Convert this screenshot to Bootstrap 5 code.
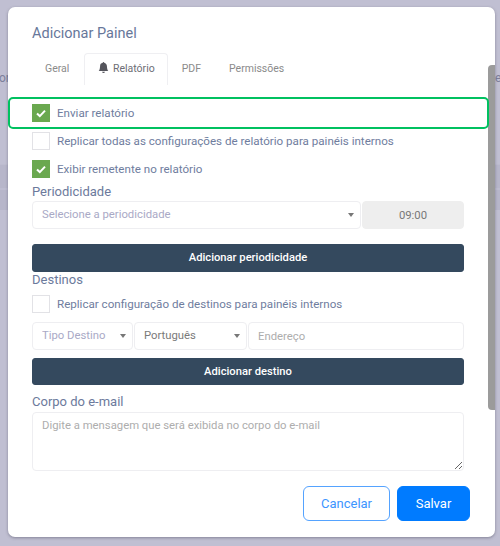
<!DOCTYPE html>
<html lang="pt-BR">
<head>
    <meta charset="UTF-8">
    <meta name="viewport" content="width=device-width, initial-scale=1.0">
    <title>Adicionar Painel</title>
    <link href="https://cdn.jsdelivr.net/npm/bootstrap@5.3.0/dist/css/bootstrap.min.css" rel="stylesheet">
    <style>
        html, body { height: 100%; overflow: hidden; }
        body {
            background: #c0bfd2;
            font-family: Roboto, "Liberation Sans", sans-serif;
            color: #6c7a9c;
            font-size: 12px;
        }
        /* what shows behind the modal */
        .backdrop-layer { position: absolute; inset: 0; }
        .backdrop-band { position: absolute; left: 0; right: 0; top: 164px; height: 46px; background: #b7b6ca; border-top: 1px solid #bdbccf; }
        .backdrop-line { position: absolute; left: 0; right: 0; top: 188px; height: 2px; background: #bdbcd0; }
        .backdrop-txt { position: absolute; top: 69px; font-size: 12px; color: #7d7f9b; }
        .txt-left { left: -1px; }
        .txt-right { left: 495px; }

        .painel {
            position: absolute;
            left: 8px; top: 7px;
            width: 487px; height: 530px;
            background: #fff;
            border-radius: 7px;
            box-shadow: 0 1px 3px rgba(60, 60, 80, .45);
            padding: 18px 31px 0 24px;
        }
        .painel-title { font-size: 14.5px; font-weight: 400; line-height: 17px; margin: 0 0 11px; color: #67779a; }

        .painel .nav-tabs { border: 0; height: 32px; margin: 0 0 19px; }
        .painel .nav-link {
            font-size: 10.5px; line-height: 13px;
            color: #8b8b8b;
            padding: 8px 13px;
            height: 32px;
            border: 1px solid transparent;
            border-bottom: 0;
            border-radius: 4px 4px 0 0;
        }
        .painel .nav-link.tab-geral { padding-left: 12px; padding-right: 14px; }
        .painel .nav-link.active { color: #6d6d75; border-color: #efeff2; background: #fff; padding-right: 12px; }
        .bell-ico { width: 11px; height: 11px; fill: #55555c; vertical-align: -1px; margin-right: 1px; }

        .check-row { display: flex; align-items: center; height: 18px; margin-bottom: 10px; }
        .check-row input {
            appearance: none;
            width: 18px; height: 18px;
            margin: 0 7px 0 0;
            flex: none;
            border: 1px solid #e2e2e6;
            background: #fff;
        }
        .check-row input:checked {
            border-color: #6aa84f;
            background: #6aa84f url("data:image/svg+xml,%3Csvg xmlns='http://www.w3.org/2000/svg' viewBox='0 0 18 18'%3E%3Cpath d='M5 9.5l2.8 2.6L13 6.6' fill='none' stroke='%23fff' stroke-width='2'/%3E%3C/svg%3E") center / 18px no-repeat;
        }
        .check-row label { font-size: 11.6px; line-height: 18px; color: #6f7d9e; }
        .check-row.last-check { margin-bottom: 6px; }
        .check-row.dest-check { margin: 8px 0 9px; }

        .sec-label { display: block; font-size: 13px; line-height: 16px; margin: 0; color: #6c7a9c; }
        .label-dest { line-height: 14px; margin-top: 1px; }
        .label-corpo { margin-top: 9px; }

        .periodo-row { margin-top: 1px; }
        .destino-row { gap: 1px; }
        .tipo-sel { width: 101px; flex: none; }
        .idioma-sel { width: 113px; flex: none; }
        .painel .time-box { width: 102px; flex: none; margin-left: 1px; }

        .painel .form-control, .painel .form-select {
            height: 28px;
            font-size: 11.3px;
            line-height: 16px;
            padding: 5px 9px;
            border: 1px solid #eeeef1;
            border-radius: 4px;
            box-shadow: none;
            color: #7a7a7a;
        }
        .painel .form-select {
            padding-right: 20px;
            background-image: url("data:image/svg+xml,%3Csvg xmlns='http://www.w3.org/2000/svg' viewBox='0 0 6 4'%3E%3Cpath d='M0 0h6L3 4z' fill='%23777'/%3E%3C/svg%3E");
            background-size: 6px 4px;
            background-position: right 6px center;
        }
        .painel .form-select.is-empty { color: #a9a9c6; }
        .painel .form-control::placeholder { color: #adadad; }
        .painel .time-box { background: #eee; text-align: center; border-color: #eee; color: #777; }
        .painel .corpo-area { height: 59px; margin-top: 2px; }

        .dark-btn {
            background: #34495e; border-color: #34495e; color: #fff;
            font-size: 11.2px; font-weight: 500; line-height: 14px;
            height: 28px; padding: 0;
            border-radius: 3px;
        }
        .dark-btn:hover { background: #34495e; color: #fff; }
        .btn-periodo { margin-top: 15px; }
        .btn-destino { margin-top: 8px; height: 27px; }

        .footer-acts { position: absolute; right: 25px; top: 479px; display: flex; gap: 7px; }
        .footer-acts .btn { height: 35px; font-size: 13px; line-height: 16px; padding: 0; border-radius: 6px; }
        .btn-cancel { width: 87px; background: #fff; color: #3d95ff; border: 1px solid #55a3ff; }
        .btn-salvar { width: 73px; background: #007bff; color: #fff; border: 1px solid #007bff; }

        .scroll-thumb {
            position: absolute; left: 480px; top: 58px;
            width: 7px; height: 345px;
            background: #9b9b9b;
            border-radius: 4px 0 0 4px;
        }
        .green-mark {
            position: absolute; left: 0; top: 90px;
            width: 481px; height: 32px;
            border: 2px solid #00c160;
            border-radius: 5px;
            pointer-events: none;
        }
    </style>
</head>
<body>
    <div class="backdrop-layer">
        <div class="backdrop-band"></div>
        <div class="backdrop-line"></div>
        <span class="backdrop-txt txt-left">or</span>
        <span class="backdrop-txt txt-right">e</span>
    </div>

    <div class="painel">
        <h5 class="painel-title">Adicionar Painel</h5>

        <ul class="nav nav-tabs">
            <li class="nav-item"><a class="nav-link tab-geral" href="#">Geral</a></li>
            <li class="nav-item">
                <a class="nav-link active" href="#">
                    <svg class="bell-ico" viewBox="0 0 16 16"><path d="M8 16a2 2 0 0 0 2-2H6a2 2 0 0 0 2 2zm.995-14.901a1 1 0 1 0-1.99 0A5.002 5.002 0 0 0 3 6c0 1.098-.5 6-2 7h14c-1.5-1-2-5.902-2-7 0-2.42-1.72-4.44-4.005-4.901z"/></svg>
                    Relatório
                </a>
            </li>
            <li class="nav-item"><a class="nav-link" href="#">PDF</a></li>
            <li class="nav-item"><a class="nav-link" href="#">Permissões</a></li>
        </ul>

        <div class="check-row"><input type="checkbox" id="c1" checked><label for="c1">Enviar relatório</label></div>
        <div class="check-row"><input type="checkbox" id="c2"><label for="c2">Replicar todas as configurações de relatório para painéis internos</label></div>
        <div class="check-row last-check"><input type="checkbox" id="c3" checked><label for="c3">Exibir remetente no relatório</label></div>

        <label class="sec-label">Periodicidade</label>
        <div class="d-flex periodo-row">
            <select class="form-select is-empty flex-grow-1"><option>Selecione a periodicidade</option></select>
            <input class="form-control time-box" value="09:00">
        </div>
        <button class="btn dark-btn w-100 d-block btn-periodo">Adicionar periodicidade</button>

        <label class="sec-label label-dest">Destinos</label>
        <div class="check-row dest-check"><input type="checkbox" id="c4"><label for="c4">Replicar configuração de destinos para painéis internos</label></div>

        <div class="d-flex destino-row">
            <select class="form-select is-empty tipo-sel"><option>Tipo Destino</option></select>
            <select class="form-select idioma-sel"><option>Português</option></select>
            <input class="form-control" placeholder="Endereço">
        </div>
        <button class="btn dark-btn w-100 d-block btn-destino">Adicionar destino</button>

        <label class="sec-label label-corpo">Corpo do e-mail</label>
        <textarea class="form-control corpo-area" placeholder="Digite a mensagem que será exibida no corpo do e-mail"></textarea>

        <div class="footer-acts">
            <button class="btn btn-cancel">Cancelar</button>
            <button class="btn btn-salvar">Salvar</button>
        </div>

        <div class="scroll-thumb"></div>
        <div class="green-mark"></div>
    </div>

    <script src="https://cdn.jsdelivr.net/npm/bootstrap@5.3.0/dist/js/bootstrap.bundle.min.js"></script>
</body>
</html>
